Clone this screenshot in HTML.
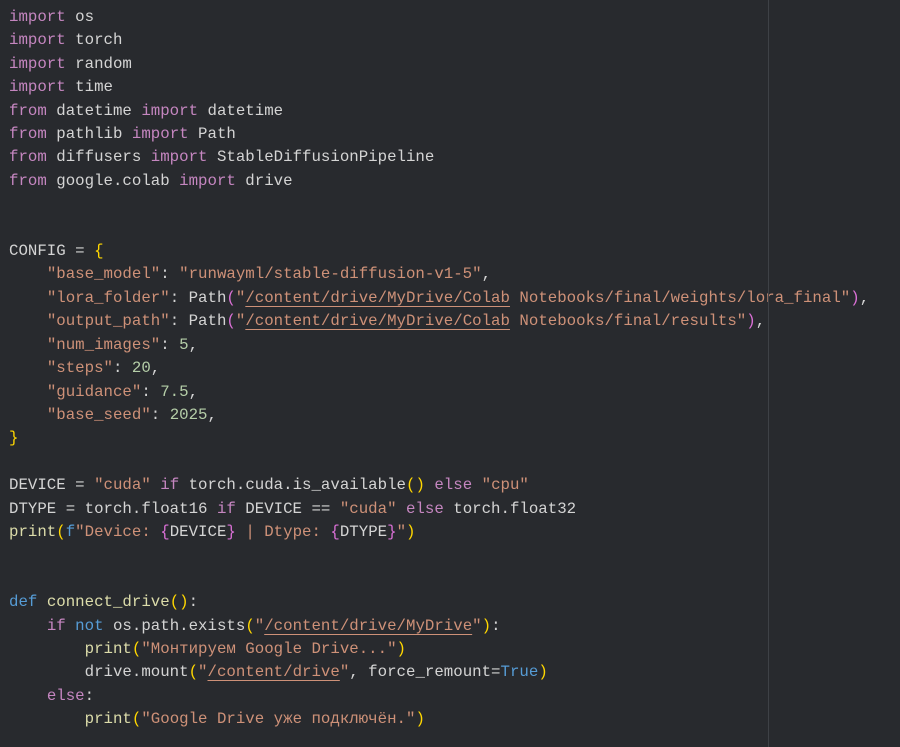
<!DOCTYPE html>
<html><head><meta charset="utf-8"><style>
html,body{margin:0;padding:0;background:#282a2e;width:900px;height:747px;overflow:hidden}
pre{margin:0;padding:6px 0 0 9px;font-family:"Liberation Mono","DejaVu Sans Mono",monospace;font-size:15.75px;line-height:23.4px;color:#d4d4d4;white-space:pre}
.k{color:#c586c0}.b{color:#569cd6}.s{color:#ce9178}.n{color:#b5cea8}.f{color:#dcdcaa}.y{color:#ffd700}.p{color:#da70d6}
.u{text-decoration:underline;text-decoration-color:#ce9178;text-underline-offset:4px}
.rule{position:absolute;left:768px;top:0;width:1px;height:747px;background:#3e4146}
</style></head><body><div class="rule"></div><pre><span class="k">import</span> os
<span class="k">import</span> torch
<span class="k">import</span> random
<span class="k">import</span> time
<span class="k">from</span> datetime <span class="k">import</span> datetime
<span class="k">from</span> pathlib <span class="k">import</span> Path
<span class="k">from</span> diffusers <span class="k">import</span> StableDiffusionPipeline
<span class="k">from</span> google.colab <span class="k">import</span> drive


CONFIG = <span class="y">{</span>
    <span class="s">"base_model"</span>: <span class="s">"runwayml/stable-diffusion-v1-5"</span>,
    <span class="s">"lora_folder"</span>: Path<span class="p">(</span><span class="s">"<span class="u">/content/drive/MyDrive/Colab</span> Notebooks/final/weights/lora_final"</span><span class="p">)</span>,
    <span class="s">"output_path"</span>: Path<span class="p">(</span><span class="s">"<span class="u">/content/drive/MyDrive/Colab</span> Notebooks/final/results"</span><span class="p">)</span>,
    <span class="s">"num_images"</span>: <span class="n">5</span>,
    <span class="s">"steps"</span>: <span class="n">20</span>,
    <span class="s">"guidance"</span>: <span class="n">7.5</span>,
    <span class="s">"base_seed"</span>: <span class="n">2025</span>,
<span class="y">}</span>

DEVICE = <span class="s">"cuda"</span> <span class="k">if</span> torch.cuda.is_available<span class="y">()</span> <span class="k">else</span> <span class="s">"cpu"</span>
DTYPE = torch.float16 <span class="k">if</span> DEVICE == <span class="s">"cuda"</span> <span class="k">else</span> torch.float32
<span class="f">print</span><span class="y">(</span><span class="b">f</span><span class="s">"Device: </span><span class="p">{</span>DEVICE<span class="p">}</span><span class="s"> | Dtype: </span><span class="p">{</span>DTYPE<span class="p">}</span><span class="s">"</span><span class="y">)</span>


<span class="b">def</span> <span class="f">connect_drive</span><span class="y">()</span>:
    <span class="k">if</span> <span class="b">not</span> os.path.exists<span class="y">(</span><span class="s">"<span class="u">/content/drive/MyDrive</span>"</span><span class="y">)</span>:
        <span class="f">print</span><span class="y">(</span><span class="s">"Монтируем Google Drive..."</span><span class="y">)</span>
        drive.mount<span class="y">(</span><span class="s">"<span class="u">/content/drive</span>"</span>, force_remount=<span class="b">True</span><span class="y">)</span>
    <span class="k">else</span>:
        <span class="f">print</span><span class="y">(</span><span class="s">"Google Drive уже подключён."</span><span class="y">)</span>
</pre></body></html>
